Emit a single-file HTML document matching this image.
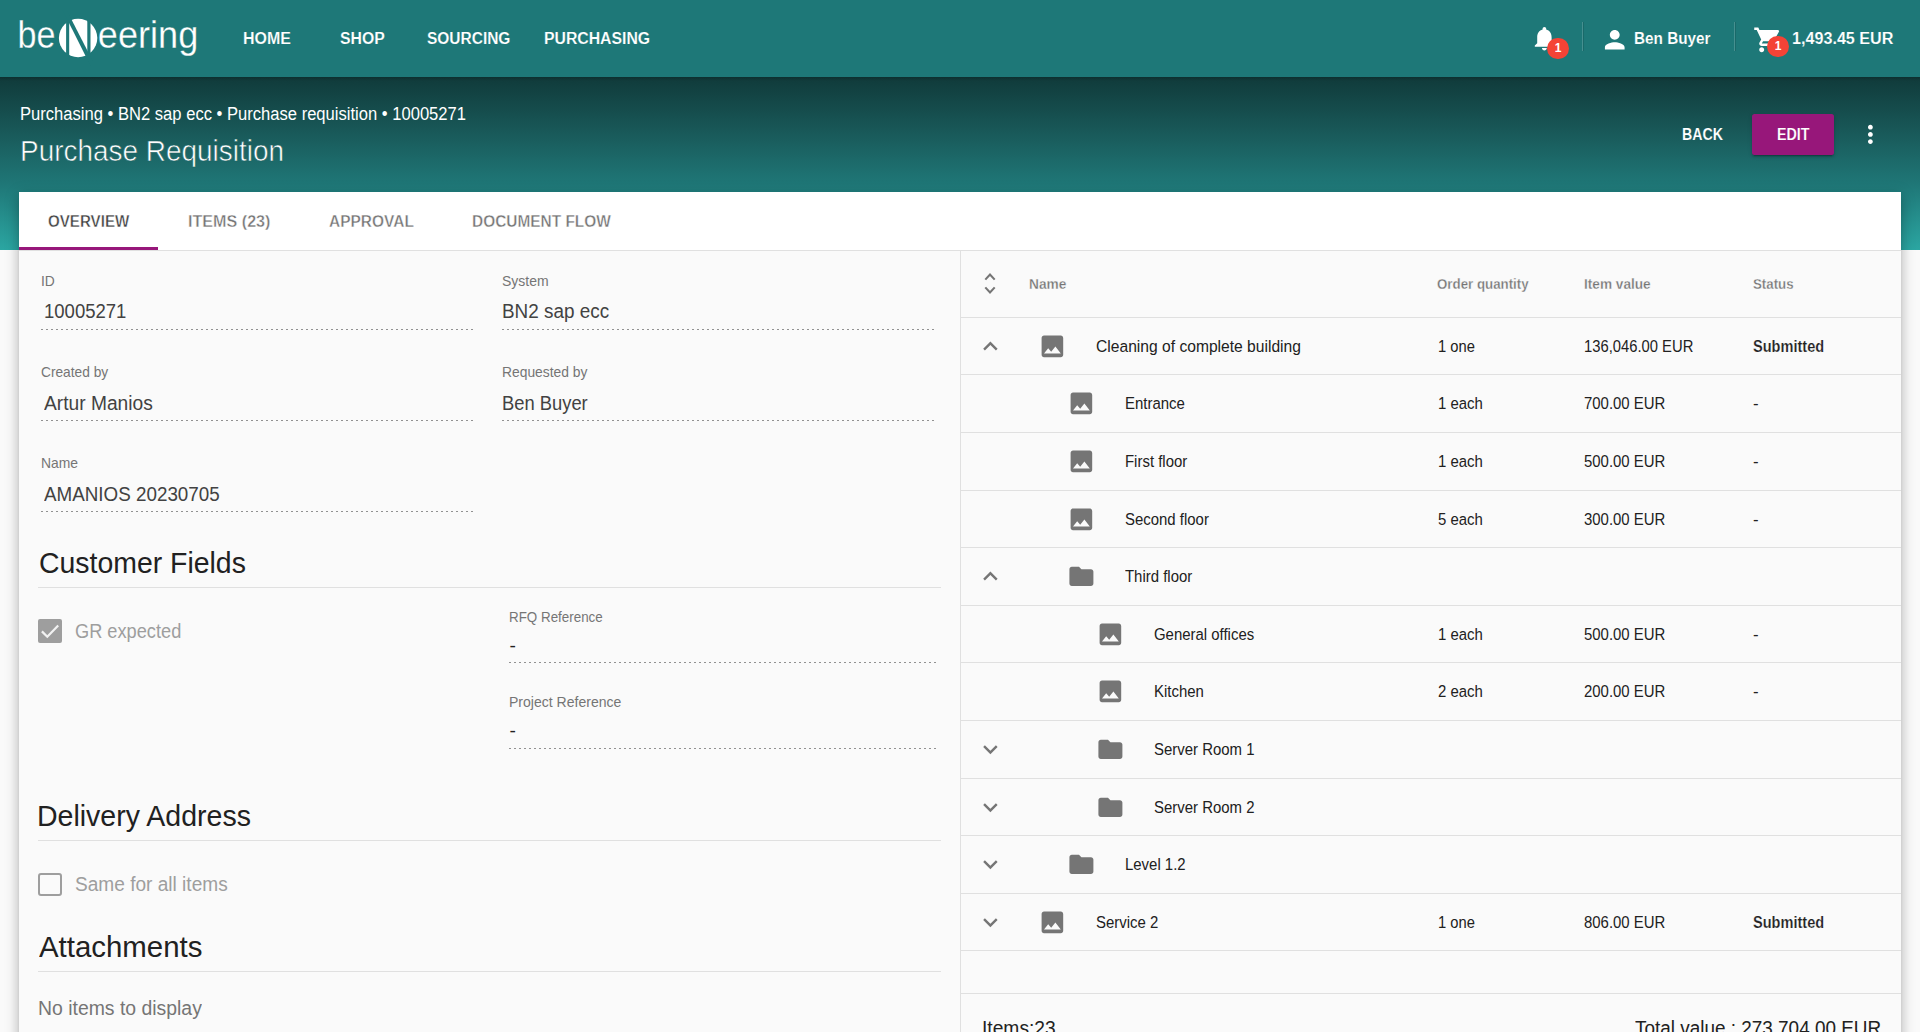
<!DOCTYPE html>
<html><head><meta charset="utf-8"><style>
html,body{margin:0;padding:0;width:1920px;height:1032px;overflow:hidden;background:#fafafa;font-family:"Liberation Sans",sans-serif;}
.t{position:absolute;white-space:nowrap;line-height:1;transform-origin:0 0;}
.badge{position:absolute;width:21.3px;height:21.3px;border-radius:50%;background:#f44336;color:#fff;font-size:12px;font-weight:700;line-height:21.3px;text-align:center;}
</style></head><body>
<div style="position:absolute;left:0px;top:0px;width:1920px;height:77px;background:#1e7878;"></div>
<div style="position:absolute;left:0px;top:77px;width:1920px;height:173px;background:linear-gradient(to bottom,#103a3a 0%,#195a5a 33%,#1f7777 62%,#2ba6a2 100%);"></div>
<div style="position:absolute;left:0px;top:77px;width:1920px;height:4px;background:linear-gradient(to bottom,rgba(0,0,0,0.18),rgba(0,0,0,0));"></div>
<div style="position:absolute;left:0px;top:250px;width:1920px;height:782px;background:#fafafa;"></div>
<div style="position:absolute;left:19px;top:192px;width:1882px;height:900px;background:#fafafa;box-shadow:0px 5px 5px -3px rgba(0,0,0,0.2),0px 8px 10px 1px rgba(0,0,0,0.14),0px 3px 14px 2px rgba(0,0,0,0.12);"></div>
<div style="position:absolute;left:19px;top:192px;width:1882px;height:58px;background:#fff;"></div>
<div style="position:absolute;left:19px;top:250px;width:1882px;height:1px;background:#e0e0e0;"></div>
<svg style="position:absolute;left:0;top:0" width="240" height="77" viewBox="0 0 240 77">
<text x="17.6" y="48" font-family="Liberation Sans" font-size="39" fill="#fff" stroke="#1e7878" stroke-width="0.3" paint-order="normal" textLength="38" lengthAdjust="spacingAndGlyphs">be</text>
<circle cx="78.1" cy="38" r="19.2" fill="#fff"/>
<rect x="66.1" y="15" width="3.1" height="50" fill="#1e7878"/>
<rect x="87.3" y="15" width="3.2" height="50" fill="#1e7878"/>
<polygon points="62.5,10 66.6,10 95.3,66 90.6,66" fill="#1e7878"/>
<text x="97.8" y="48" font-family="Liberation Sans" font-size="39" fill="#fff" stroke="#1e7878" stroke-width="0.3" paint-order="normal" textLength="100.5" lengthAdjust="spacingAndGlyphs">eering</text>
</svg>
<div class="t" style="left:242.50px;top:31.00px;font-size:16.8px;font-weight:700;color:#fff;transform:scaleX(0.9504);-webkit-text-stroke:0.15px #1e7878;">HOME</div>
<div class="t" style="left:339.90px;top:31.00px;font-size:16.8px;font-weight:700;color:#fff;transform:scaleX(0.9406);-webkit-text-stroke:0.15px #1e7878;">SHOP</div>
<div class="t" style="left:427.00px;top:31.00px;font-size:16.8px;font-weight:700;color:#fff;transform:scaleX(0.9221);-webkit-text-stroke:0.15px #1e7878;">SOURCING</div>
<div class="t" style="left:544.30px;top:31.00px;font-size:16.8px;font-weight:700;color:#fff;transform:scaleX(0.9400);-webkit-text-stroke:0.15px #1e7878;">PURCHASING</div>
<svg style="position:absolute;left:1530px;top:24px;" width="28.8" height="28.8" viewBox="0 0 24 24"><path fill="#fff" d="M12 22c1.1 0 2-.9 2-2h-4c0 1.1.89 2 2 2zm6-6v-5c0-3.07-1.64-5.64-4.5-6.32V4c0-.83-.67-1.5-1.5-1.5s-1.5.67-1.5 1.5v.68C7.63 5.36 6 7.92 6 11v5l-2 2v1h16v-1l-2-2z"/></svg>
<div class="badge" style="left:1547.4px;top:38px;">1</div>
<div style="position:absolute;left:1582px;top:22px;width:1px;height:29px;background:rgba(255,255,255,0.18);"></div>
<div style="position:absolute;left:1583px;top:22px;width:1px;height:29px;background:rgba(0,0,0,0.12);"></div>
<svg style="position:absolute;left:1600.4px;top:24.6px;" width="29.5" height="29.5" viewBox="0 0 24 24"><path fill="#fff" d="M12 12c2.21 0 4-1.79 4-4s-1.79-4-4-4-4 1.79-4 4 1.79 4 4 4zm0 2c-2.67 0-8 1.34-8 4v2h16v-2c0-2.66-5.33-4-8-4z"/></svg>
<div class="t" style="left:1634.40px;top:31.00px;font-size:16.8px;font-weight:700;color:#fff;transform:scaleX(0.9119);-webkit-text-stroke:0.15px #1e7878;">Ben Buyer</div>
<div style="position:absolute;left:1734px;top:22px;width:1px;height:29px;background:rgba(255,255,255,0.18);"></div>
<div style="position:absolute;left:1735px;top:22px;width:1px;height:29px;background:rgba(0,0,0,0.12);"></div>
<svg style="position:absolute;left:1752.7px;top:24.6px;" width="29.8" height="29.8" viewBox="0 0 24 24"><path fill="#fff" d="M7 18c-1.1 0-1.99.9-1.99 2S5.9 22 7 22s2-.9 2-2-.9-2-2-2zM1 2v2h2l3.6 7.59-1.35 2.45c-.16.28-.25.61-.25.96 0 1.1.9 2 2 2h12v-2H7.42c-.14 0-.25-.11-.25-.25l.03-.12.9-1.63h7.45c.75 0 1.41-.41 1.75-1.03l3.58-6.49A1.003 1.003 0 0020 4H5.21l-.94-2H1zm16 16c-1.1 0-1.99.9-1.99 2s.89 2 1.99 2 2-.9 2-2-.9-2-2-2z"/></svg>
<div class="badge" style="left:1767.4px;top:36px;">1</div>
<div class="t" style="left:1791.90px;top:31.00px;font-size:16.8px;font-weight:700;color:#fff;transform:scaleX(0.9620);-webkit-text-stroke:0.15px #1e7878;">1,493.45 EUR</div>
<div class="t" style="left:20.00px;top:105.00px;font-size:18px;font-weight:400;color:#fff;transform:scaleX(0.9211);">Purchasing • BN2 sap ecc • Purchase requisition • 10005271</div>
<div class="t" style="left:20.20px;top:136.00px;font-size:30px;font-weight:400;color:#fff;transform:scaleX(0.9312);-webkit-text-stroke:0.6px #1a6262;">Purchase Requisition</div>
<div class="t" style="left:1681.50px;top:127.00px;font-size:16.8px;font-weight:700;color:#fff;transform:scaleX(0.8445);-webkit-text-stroke:0.15px #175757;">BACK</div>
<div style="position:absolute;left:1752px;top:114px;width:82px;height:41px;background:#97177a;border-radius:2.5px;box-shadow:0 3px 1px -2px rgba(0,0,0,.2),0 2px 2px 0 rgba(0,0,0,.14),0 1px 5px 0 rgba(0,0,0,.12);"></div>
<div class="t" style="left:1776.60px;top:127.00px;font-size:16.8px;font-weight:700;color:#fff;transform:scaleX(0.8511);-webkit-text-stroke:0.15px #97177a;">EDIT</div>
<svg style="position:absolute;left:1855.6px;top:120.2px;" width="28.8" height="28.8" viewBox="0 0 24 24"><path fill="#fff" d="M12 8c1.1 0 2-.9 2-2s-.9-2-2-2-2 .9-2 2 .9 2 2 2zm0 2c-1.1 0-2 .9-2 2s.9 2 2 2 2-.9 2-2-.9-2-2-2zm0 6c-1.1 0-2 .9-2 2s.9 2 2 2 2-.9 2-2-.9-2-2-2z"/></svg>
<div class="t" style="left:48.30px;top:214.00px;font-size:16.8px;font-weight:700;color:#424242;transform:scaleX(0.9014);-webkit-text-stroke:0.4px #fff;">OVERVIEW</div>
<div class="t" style="left:188.30px;top:214.00px;font-size:16.8px;font-weight:700;color:#757575;transform:scaleX(0.9610);-webkit-text-stroke:0.4px #fff;">ITEMS (23)</div>
<div class="t" style="left:329.00px;top:214.00px;font-size:16.8px;font-weight:700;color:#757575;transform:scaleX(0.9233);-webkit-text-stroke:0.4px #fff;">APPROVAL</div>
<div class="t" style="left:472.00px;top:214.00px;font-size:16.8px;font-weight:700;color:#757575;transform:scaleX(0.9193);-webkit-text-stroke:0.4px #fff;">DOCUMENT FLOW</div>
<div style="position:absolute;left:19px;top:247px;width:139px;height:3px;background:#97177a;"></div>
<div class="t" style="left:40.80px;top:274.00px;font-size:14.4px;font-weight:400;color:#757575;transform:scaleX(0.9600);">ID</div>
<div class="t" style="left:44.00px;top:301.00px;font-size:20px;font-weight:400;color:#424242;transform:scaleX(0.9254);">10005271</div>
<div style="position:absolute;left:41px;top:329px;width:434px;height:1px;background-image:linear-gradient(to right,rgba(0,0,0,0.42) 33%,transparent 0%);background-size:5px 1px;background-repeat:repeat-x;"></div>
<div class="t" style="left:501.80px;top:274.00px;font-size:14.4px;font-weight:400;color:#757575;transform:scaleX(0.9720);">System</div>
<div class="t" style="left:502.30px;top:301.00px;font-size:20px;font-weight:400;color:#424242;transform:scaleX(0.9446);">BN2 sap ecc</div>
<div style="position:absolute;left:502px;top:329px;width:434px;height:1px;background-image:linear-gradient(to right,rgba(0,0,0,0.42) 33%,transparent 0%);background-size:5px 1px;background-repeat:repeat-x;"></div>
<div class="t" style="left:40.80px;top:365.00px;font-size:14.4px;font-weight:400;color:#757575;transform:scaleX(0.9540);">Created by</div>
<div class="t" style="left:44.00px;top:393.00px;font-size:20px;font-weight:400;color:#424242;transform:scaleX(0.9600);">Artur Manios</div>
<div style="position:absolute;left:41px;top:420px;width:434px;height:1px;background-image:linear-gradient(to right,rgba(0,0,0,0.42) 33%,transparent 0%);background-size:5px 1px;background-repeat:repeat-x;"></div>
<div class="t" style="left:501.80px;top:365.00px;font-size:14.4px;font-weight:400;color:#757575;transform:scaleX(0.9620);">Requested by</div>
<div class="t" style="left:502.30px;top:393.00px;font-size:20px;font-weight:400;color:#424242;transform:scaleX(0.9178);">Ben Buyer</div>
<div style="position:absolute;left:502px;top:420px;width:434px;height:1px;background-image:linear-gradient(to right,rgba(0,0,0,0.42) 33%,transparent 0%);background-size:5px 1px;background-repeat:repeat-x;"></div>
<div class="t" style="left:40.80px;top:456.00px;font-size:14.4px;font-weight:400;color:#757575;transform:scaleX(0.9650);">Name</div>
<div class="t" style="left:44.00px;top:484.00px;font-size:20px;font-weight:400;color:#424242;transform:scaleX(0.9408);">AMANIOS 20230705</div>
<div style="position:absolute;left:41px;top:511px;width:434px;height:1px;background-image:linear-gradient(to right,rgba(0,0,0,0.42) 33%,transparent 0%);background-size:5px 1px;background-repeat:repeat-x;"></div>
<div class="t" style="left:39.40px;top:548.00px;font-size:30px;font-weight:400;color:#212121;transform:scaleX(0.9471);">Customer Fields</div>
<div style="position:absolute;left:38px;top:587px;width:903px;height:1px;background:#e0e0e0;"></div>
<div style="position:absolute;left:38px;top:619px;width:24px;height:24px;background:#9e9e9e;border-radius:2px;"></div>
<svg style="position:absolute;left:38px;top:619px" width="24" height="24"><polyline points="3.9,12.4 9.3,17.8 20.2,6.4" fill="none" stroke="#f2f2f2" stroke-width="2.2"/></svg>
<div class="t" style="left:75.25px;top:621.00px;font-size:20px;font-weight:400;color:#9e9e9e;transform:scaleX(0.9105);">GR expected</div>
<div class="t" style="left:508.80px;top:610.00px;font-size:14.4px;font-weight:400;color:#757575;transform:scaleX(0.9300);">RFQ Reference</div>
<div style="position:absolute;left:509px;top:662px;width:429px;height:1px;background-image:linear-gradient(to right,rgba(0,0,0,0.42) 33%,transparent 0%);background-size:5px 1px;background-repeat:repeat-x;"></div>
<div class="t" style="left:509.50px;top:636.00px;font-size:19.2px;font-weight:400;color:#212121;">-</div>
<div class="t" style="left:508.80px;top:695.00px;font-size:14.4px;font-weight:400;color:#757575;transform:scaleX(0.9750);">Project Reference</div>
<div style="position:absolute;left:509px;top:748px;width:429px;height:1px;background-image:linear-gradient(to right,rgba(0,0,0,0.42) 33%,transparent 0%);background-size:5px 1px;background-repeat:repeat-x;"></div>
<div class="t" style="left:509.50px;top:721.00px;font-size:19.2px;font-weight:400;color:#212121;">-</div>
<div class="t" style="left:37.30px;top:801.00px;font-size:30px;font-weight:400;color:#212121;transform:scaleX(0.9503);">Delivery Address</div>
<div style="position:absolute;left:38px;top:840px;width:903px;height:1px;background:#e0e0e0;"></div>
<div style="position:absolute;left:38px;top:872.5px;width:24px;height:23px;box-sizing:border-box;border:2px solid #9e9e9e;border-radius:3px;"></div>
<div class="t" style="left:75.25px;top:874.00px;font-size:20px;font-weight:400;color:#9e9e9e;transform:scaleX(0.9541);">Same for all items</div>
<div class="t" style="left:39.00px;top:932.00px;font-size:30px;font-weight:400;color:#212121;transform:scaleX(0.9802);">Attachments</div>
<div style="position:absolute;left:38px;top:971px;width:903px;height:1px;background:#e0e0e0;"></div>
<div class="t" style="left:38.00px;top:998.00px;font-size:20px;font-weight:400;color:#757575;transform:scaleX(0.9698);">No items to display</div>
<div style="position:absolute;left:960px;top:250px;width:1px;height:782px;background:#e0e0e0;"></div>
<svg style="position:absolute;left:960px;top:260px" width="60" height="50"><polyline points="25.3,19.6 30,14.6 34.7,19.6" fill="none" stroke="#757575" stroke-width="2.1"/><polyline points="25.3,27.4 30,32.4 34.7,27.4" fill="none" stroke="#757575" stroke-width="2.1"/></svg>
<div class="t" style="left:1028.60px;top:277.00px;font-size:14.4px;font-weight:700;color:#757575;transform:scaleX(0.9531);-webkit-text-stroke:0.3px #fafafa;">Name</div>
<div class="t" style="left:1437.30px;top:277.00px;font-size:14.4px;font-weight:700;color:#757575;transform:scaleX(0.9242);-webkit-text-stroke:0.3px #fafafa;">Order quantity</div>
<div class="t" style="left:1583.50px;top:277.00px;font-size:14.4px;font-weight:700;color:#757575;transform:scaleX(0.9472);-webkit-text-stroke:0.3px #fafafa;">Item value</div>
<div class="t" style="left:1752.50px;top:277.00px;font-size:14.4px;font-weight:700;color:#757575;transform:scaleX(0.9229);-webkit-text-stroke:0.3px #fafafa;">Status</div>
<div style="position:absolute;left:961px;top:317px;width:940px;height:1px;background:#e0e0e0;"></div>
<div style="position:absolute;left:961px;top:374px;width:940px;height:1px;background:#e0e0e0;"></div>
<div style="position:absolute;left:961px;top:432px;width:940px;height:1px;background:#e0e0e0;"></div>
<div style="position:absolute;left:961px;top:490px;width:940px;height:1px;background:#e0e0e0;"></div>
<div style="position:absolute;left:961px;top:547px;width:940px;height:1px;background:#e0e0e0;"></div>
<div style="position:absolute;left:961px;top:605px;width:940px;height:1px;background:#e0e0e0;"></div>
<div style="position:absolute;left:961px;top:662px;width:940px;height:1px;background:#e0e0e0;"></div>
<div style="position:absolute;left:961px;top:720px;width:940px;height:1px;background:#e0e0e0;"></div>
<div style="position:absolute;left:961px;top:778px;width:940px;height:1px;background:#e0e0e0;"></div>
<div style="position:absolute;left:961px;top:835px;width:940px;height:1px;background:#e0e0e0;"></div>
<div style="position:absolute;left:961px;top:893px;width:940px;height:1px;background:#e0e0e0;"></div>
<div style="position:absolute;left:961px;top:950px;width:940px;height:1px;background:#e0e0e0;"></div>
<div style="position:absolute;left:961px;top:993px;width:940px;height:1px;background:#e0e0e0;"></div>
<svg style="position:absolute;left:975.6px;top:331.6px;" width="28.8" height="28.8" viewBox="0 0 24 24"><path fill="#757575" d="M12 8l-6 6 1.41 1.41L12 10.83l4.59 4.58L18 14z"/></svg>
<svg style="position:absolute;left:1037.9px;top:331.6px;" width="28.8" height="28.8" viewBox="0 0 24 24"><path fill="#757575" d="M21 19V5c0-1.1-.9-2-2-2H5c-1.1 0-2 .9-2 2v14c0 1.1.9 2 2 2h14c1.1 0 2-.9 2-2zM8.5 13.5l2.5 3.01L14.5 12l4.5 6H5l3.5-4.5z"/></svg>
<div class="t" style="left:1096.00px;top:339.00px;font-size:16.8px;font-weight:400;color:#212121;transform:scaleX(0.9310);">Cleaning of complete building</div>
<div class="t" style="left:1437.90px;top:339.00px;font-size:16.8px;font-weight:400;color:#212121;transform:scaleX(0.8770);">1 one</div>
<div class="t" style="left:1583.50px;top:339.00px;font-size:16.8px;font-weight:400;color:#212121;transform:scaleX(0.8810);">136,046.00 EUR</div>
<div class="t" style="left:1752.50px;top:339.00px;font-size:16.8px;font-weight:700;color:#212121;transform:scaleX(0.8670);-webkit-text-stroke:0.2px #fafafa;">Submitted</div>
<svg style="position:absolute;left:1066.7px;top:389.1px;" width="28.8" height="28.8" viewBox="0 0 24 24"><path fill="#757575" d="M21 19V5c0-1.1-.9-2-2-2H5c-1.1 0-2 .9-2 2v14c0 1.1.9 2 2 2h14c1.1 0 2-.9 2-2zM8.5 13.5l2.5 3.01L14.5 12l4.5 6H5l3.5-4.5z"/></svg>
<div class="t" style="left:1124.80px;top:396.00px;font-size:16.8px;font-weight:400;color:#212121;transform:scaleX(0.8920);">Entrance</div>
<div class="t" style="left:1437.90px;top:396.00px;font-size:16.8px;font-weight:400;color:#212121;transform:scaleX(0.8900);">1 each</div>
<div class="t" style="left:1583.50px;top:396.00px;font-size:16.8px;font-weight:400;color:#212121;transform:scaleX(0.8900);">700.00 EUR</div>
<div class="t" style="left:1753.00px;top:396.00px;font-size:16.8px;font-weight:400;color:#212121;">-</div>
<svg style="position:absolute;left:1066.7px;top:447.1px;" width="28.8" height="28.8" viewBox="0 0 24 24"><path fill="#757575" d="M21 19V5c0-1.1-.9-2-2-2H5c-1.1 0-2 .9-2 2v14c0 1.1.9 2 2 2h14c1.1 0 2-.9 2-2zM8.5 13.5l2.5 3.01L14.5 12l4.5 6H5l3.5-4.5z"/></svg>
<div class="t" style="left:1124.80px;top:454.00px;font-size:16.8px;font-weight:400;color:#212121;transform:scaleX(0.8900);">First floor</div>
<div class="t" style="left:1437.90px;top:454.00px;font-size:16.8px;font-weight:400;color:#212121;transform:scaleX(0.8900);">1 each</div>
<div class="t" style="left:1583.50px;top:454.00px;font-size:16.8px;font-weight:400;color:#212121;transform:scaleX(0.8900);">500.00 EUR</div>
<div class="t" style="left:1753.00px;top:454.00px;font-size:16.8px;font-weight:400;color:#212121;">-</div>
<svg style="position:absolute;left:1066.7px;top:504.6px;" width="28.8" height="28.8" viewBox="0 0 24 24"><path fill="#757575" d="M21 19V5c0-1.1-.9-2-2-2H5c-1.1 0-2 .9-2 2v14c0 1.1.9 2 2 2h14c1.1 0 2-.9 2-2zM8.5 13.5l2.5 3.01L14.5 12l4.5 6H5l3.5-4.5z"/></svg>
<div class="t" style="left:1124.80px;top:512.00px;font-size:16.8px;font-weight:400;color:#212121;transform:scaleX(0.8900);">Second floor</div>
<div class="t" style="left:1437.90px;top:512.00px;font-size:16.8px;font-weight:400;color:#212121;transform:scaleX(0.8900);">5 each</div>
<div class="t" style="left:1583.50px;top:512.00px;font-size:16.8px;font-weight:400;color:#212121;transform:scaleX(0.8900);">300.00 EUR</div>
<div class="t" style="left:1753.00px;top:512.00px;font-size:16.8px;font-weight:400;color:#212121;">-</div>
<svg style="position:absolute;left:975.6px;top:562.1px;" width="28.8" height="28.8" viewBox="0 0 24 24"><path fill="#757575" d="M12 8l-6 6 1.41 1.41L12 10.83l4.59 4.58L18 14z"/></svg>
<svg style="position:absolute;left:1066.7px;top:562.1px;" width="28.8" height="28.8" viewBox="0 0 24 24"><path fill="#757575" d="M10 4H4c-1.1 0-1.99.9-1.99 2L2 18c0 1.1.9 2 2 2h16c1.1 0 2-.9 2-2V8c0-1.1-.9-2-2-2h-8l-2-2z"/></svg>
<div class="t" style="left:1124.80px;top:569.00px;font-size:16.8px;font-weight:400;color:#212121;transform:scaleX(0.8900);">Third floor</div>
<svg style="position:absolute;left:1095.5px;top:619.6px;" width="28.8" height="28.8" viewBox="0 0 24 24"><path fill="#757575" d="M21 19V5c0-1.1-.9-2-2-2H5c-1.1 0-2 .9-2 2v14c0 1.1.9 2 2 2h14c1.1 0 2-.9 2-2zM8.5 13.5l2.5 3.01L14.5 12l4.5 6H5l3.5-4.5z"/></svg>
<div class="t" style="left:1153.60px;top:627.00px;font-size:16.8px;font-weight:400;color:#212121;transform:scaleX(0.8900);">General offices</div>
<div class="t" style="left:1437.90px;top:627.00px;font-size:16.8px;font-weight:400;color:#212121;transform:scaleX(0.8900);">1 each</div>
<div class="t" style="left:1583.50px;top:627.00px;font-size:16.8px;font-weight:400;color:#212121;transform:scaleX(0.8900);">500.00 EUR</div>
<div class="t" style="left:1753.00px;top:627.00px;font-size:16.8px;font-weight:400;color:#212121;">-</div>
<svg style="position:absolute;left:1095.5px;top:677.1px;" width="28.8" height="28.8" viewBox="0 0 24 24"><path fill="#757575" d="M21 19V5c0-1.1-.9-2-2-2H5c-1.1 0-2 .9-2 2v14c0 1.1.9 2 2 2h14c1.1 0 2-.9 2-2zM8.5 13.5l2.5 3.01L14.5 12l4.5 6H5l3.5-4.5z"/></svg>
<div class="t" style="left:1153.60px;top:684.00px;font-size:16.8px;font-weight:400;color:#212121;transform:scaleX(0.8900);">Kitchen</div>
<div class="t" style="left:1437.90px;top:684.00px;font-size:16.8px;font-weight:400;color:#212121;transform:scaleX(0.8900);">2 each</div>
<div class="t" style="left:1583.50px;top:684.00px;font-size:16.8px;font-weight:400;color:#212121;transform:scaleX(0.8900);">200.00 EUR</div>
<div class="t" style="left:1753.00px;top:684.00px;font-size:16.8px;font-weight:400;color:#212121;">-</div>
<svg style="position:absolute;left:975.6px;top:735.1px;" width="28.8" height="28.8" viewBox="0 0 24 24"><path fill="#757575" d="M16.59 8.59L12 13.17 7.41 8.59 6 10l6 6 6-6z"/></svg>
<svg style="position:absolute;left:1095.5px;top:735.1px;" width="28.8" height="28.8" viewBox="0 0 24 24"><path fill="#757575" d="M10 4H4c-1.1 0-1.99.9-1.99 2L2 18c0 1.1.9 2 2 2h16c1.1 0 2-.9 2-2V8c0-1.1-.9-2-2-2h-8l-2-2z"/></svg>
<div class="t" style="left:1153.60px;top:742.00px;font-size:16.8px;font-weight:400;color:#212121;transform:scaleX(0.8900);">Server Room 1</div>
<svg style="position:absolute;left:975.6px;top:792.6px;" width="28.8" height="28.8" viewBox="0 0 24 24"><path fill="#757575" d="M16.59 8.59L12 13.17 7.41 8.59 6 10l6 6 6-6z"/></svg>
<svg style="position:absolute;left:1095.5px;top:792.6px;" width="28.8" height="28.8" viewBox="0 0 24 24"><path fill="#757575" d="M10 4H4c-1.1 0-1.99.9-1.99 2L2 18c0 1.1.9 2 2 2h16c1.1 0 2-.9 2-2V8c0-1.1-.9-2-2-2h-8l-2-2z"/></svg>
<div class="t" style="left:1153.60px;top:800.00px;font-size:16.8px;font-weight:400;color:#212121;transform:scaleX(0.8900);">Server Room 2</div>
<svg style="position:absolute;left:975.6px;top:850.1px;" width="28.8" height="28.8" viewBox="0 0 24 24"><path fill="#757575" d="M16.59 8.59L12 13.17 7.41 8.59 6 10l6 6 6-6z"/></svg>
<svg style="position:absolute;left:1066.7px;top:850.1px;" width="28.8" height="28.8" viewBox="0 0 24 24"><path fill="#757575" d="M10 4H4c-1.1 0-1.99.9-1.99 2L2 18c0 1.1.9 2 2 2h16c1.1 0 2-.9 2-2V8c0-1.1-.9-2-2-2h-8l-2-2z"/></svg>
<div class="t" style="left:1124.80px;top:857.00px;font-size:16.8px;font-weight:400;color:#212121;transform:scaleX(0.8900);">Level 1.2</div>
<svg style="position:absolute;left:975.6px;top:907.6px;" width="28.8" height="28.8" viewBox="0 0 24 24"><path fill="#757575" d="M16.59 8.59L12 13.17 7.41 8.59 6 10l6 6 6-6z"/></svg>
<svg style="position:absolute;left:1037.9px;top:907.6px;" width="28.8" height="28.8" viewBox="0 0 24 24"><path fill="#757575" d="M21 19V5c0-1.1-.9-2-2-2H5c-1.1 0-2 .9-2 2v14c0 1.1.9 2 2 2h14c1.1 0 2-.9 2-2zM8.5 13.5l2.5 3.01L14.5 12l4.5 6H5l3.5-4.5z"/></svg>
<div class="t" style="left:1096.00px;top:915.00px;font-size:16.8px;font-weight:400;color:#212121;transform:scaleX(0.8900);">Service 2</div>
<div class="t" style="left:1437.90px;top:915.00px;font-size:16.8px;font-weight:400;color:#212121;transform:scaleX(0.8770);">1 one</div>
<div class="t" style="left:1583.50px;top:915.00px;font-size:16.8px;font-weight:400;color:#212121;transform:scaleX(0.8900);">806.00 EUR</div>
<div class="t" style="left:1752.50px;top:915.00px;font-size:16.8px;font-weight:700;color:#212121;transform:scaleX(0.8670);-webkit-text-stroke:0.2px #fafafa;">Submitted</div>
<div class="t" style="left:981.50px;top:1018.00px;font-size:20px;font-weight:400;color:#212121;transform:scaleX(0.9609);">Items:23</div>
<div class="t" style="left:1634.80px;top:1018.00px;font-size:20px;font-weight:400;color:#212121;transform:scaleX(0.9462);">Total value : 273,704.00 EUR</div>
</body></html>
